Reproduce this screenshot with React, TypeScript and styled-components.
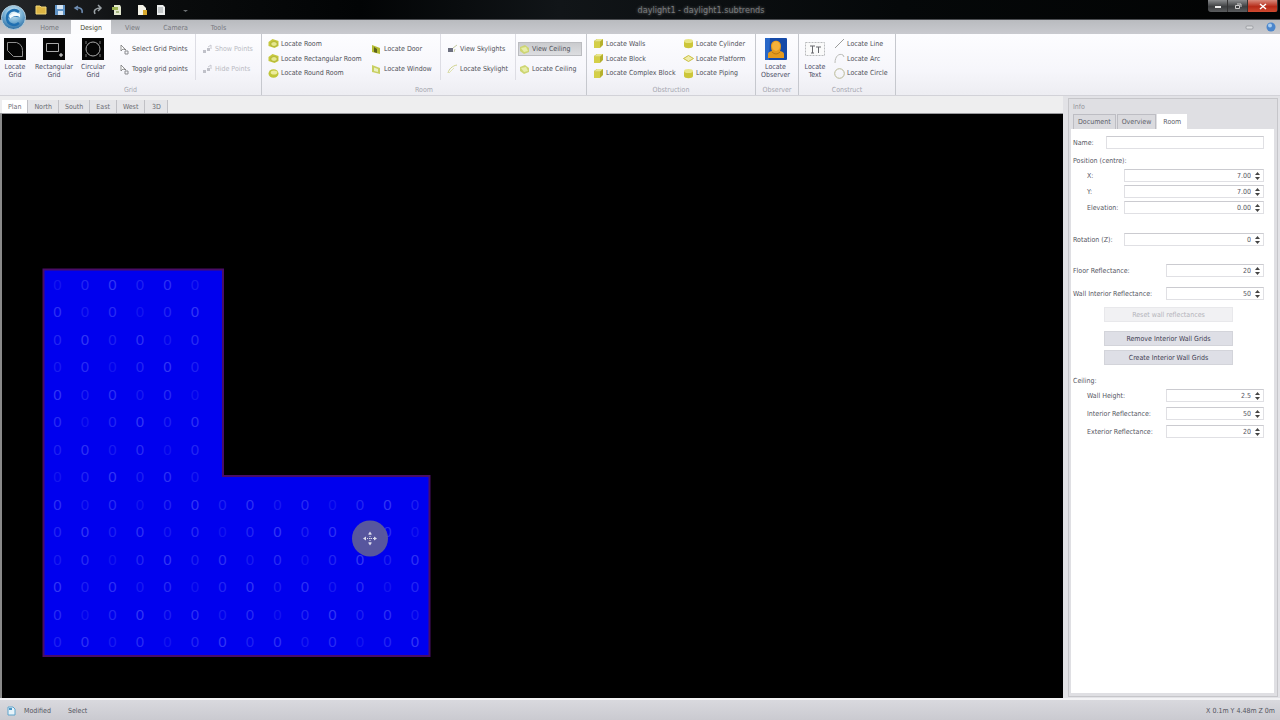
import React from 'react';
import styled, { createGlobalStyle } from 'styled-components';

const Global = createGlobalStyle`
  * { box-sizing: border-box; }
  body { margin: 0; background: #d3d3da; }
  body, button, input {
    font-family: "DejaVu Sans Condensed", "DejaVu Sans", "Liberation Sans", sans-serif;
    font-size: 7px;
    line-height: 8px;
    color: #55565f;
  }
  button { margin: 0; padding: 0; border: 0; background: none; white-space: nowrap; }
  svg { display: block; flex: none; }
`;

const Window = styled.div`
  display: flex;
  flex-direction: column;
  min-height: 100vh;
`;

/* Title bar */
const TitleBar = styled.header`
  position: relative;
  display: flex;
  justify-content: space-between;
  height: 20px;
  padding-left: 34px;
  border-bottom: 1px solid #4a4c50;
  background: linear-gradient(90deg, #25272a 0, #0a0c0d 160px, #020405 360px, #111518 560px, #050809 900px, #020303 100%);
`;
const QuickAccess = styled.nav`
  display: flex;
  align-items: center;
  gap: 5px;
`;
const QuickButton = styled.button<{ $spaced?: boolean }>`
  display: grid;
  place-items: center;
  width: 14px;
  height: 18px;
  margin-left: ${(p) => (p.$spaced ? 6 : 0)}px;
`;
const Title = styled.h1`
  position: absolute;
  left: 0;
  right: 0;
  top: 5px;
  margin: 0 0 0 122px;
  text-align: center;
  font-weight: 400;
  font-size: 9px;
  line-height: 10px;
  color: #77797c;
  text-shadow: 0 0 3px #777;
`;
const WindowButtons = styled.div`
  position: relative;
  display: flex;
  height: 12px;
  margin-right: 2px;
  border-radius: 0 0 3px 3px;
  overflow: hidden;
`;
const WindowButton = styled.button<{ $close?: boolean }>`
  display: grid;
  place-items: center;
  width: ${(p) => (p.$close ? 30 : 20)}px;
  border-right: 1px solid #333;
  background: ${(p) => (p.$close ? 'linear-gradient(#d88a7c, #b62a18 55%, #cf4a30)' : 'linear-gradient(#8a8c8e, #3c3e40 55%, #5b5d5f)')};
`;
const Orb = styled.button`
  position: absolute;
  left: 1px;
  top: 5px;
  width: 25px;
  height: 25px;
  z-index: 2;
`;

/* Ribbon */
const TabStrip = styled.nav`
  display: flex;
  align-items: stretch;
  height: 14px;
  padding-left: 28px;
  background: linear-gradient(#b9bbbf, #c9cacf);
`;
const RibbonTab = styled.button<{ $active?: boolean }>`
  min-width: ${(p) => (p.$active ? 40 : 43)}px;
  padding: 1px 8px 0;
  color: ${(p) => (p.$active ? '#4b4d35' : '#77787e')};
  background: ${(p) => (p.$active ? '#fcfcfe' : 'none')};
`;
const StripTools = styled.div`
  display: flex;
  align-items: center;
  gap: 12px;
  margin-left: auto;
  padding-right: 4px;
`;
const Ribbon = styled.section`
  display: flex;
  height: 62px;
  background: linear-gradient(#fdfdff, #f6f6fb 60%, #ededf2);
  border-bottom: 1px solid #d2d2d8;
`;
const Group = styled.div<{ $width: number }>`
  display: flex;
  flex-direction: column;
  flex: none;
  width: ${(p) => p.$width}px;
  border-right: 1px solid #c6c8ce;
`;
const GroupBody = styled.div`
  display: flex;
  height: 50px;
  padding: 0 2px;
`;
const GroupName = styled.div`
  margin-top: 2px;
  text-align: center;
  color: #a6a7b0;
`;
const LargeButton = styled.button<{ $width?: number }>`
  display: flex;
  flex-direction: column;
  align-items: center;
  flex: none;
  width: ${(p) => p.$width ?? 38}px;
  padding-top: 4px;
  gap: 3px;
  white-space: normal;
  color: #4c4d66;
`;
const Column = styled.div<{ $width: number; $divided?: boolean; $tight?: boolean; $inset?: number }>`
  display: flex;
  flex-direction: column;
  flex: none;
  gap: ${(p) => (p.$tight ? 1 : 6)}px;
  width: ${(p) => p.$width}px;
  height: 46px;
  padding: ${(p) => (p.$tight ? 3 : 8)}px 2px 0 ${(p) => p.$inset ?? 2}px;
  border-right: ${(p) => (p.$divided ? '1px solid #dddde4' : '0')};
`;
const Command = styled.button<{ $pressed?: boolean }>`
  display: flex;
  align-items: center;
  gap: 2px;
  height: 14px;
  padding-left: 1px;
  text-align: left;
  color: #4f5058;
  background: ${(p) => (p.$pressed ? 'linear-gradient(#c9cacd, #dedfe2)' : 'none')};
  box-shadow: ${(p) => (p.$pressed ? 'inset 0 0 0 1px #bbbcc0' : 'none')};
  &:disabled { color: #b9bac2; }
`;

/* Workspace */
const Workspace = styled.main`
  display: flex;
  flex: 1;
  background: #e2e2e6;
`;
const ViewArea = styled.section`
  display: flex;
  flex-direction: column;
  flex: 1;
  min-width: 0;
  background: #eeeeef;
`;
const ViewTabs = styled.nav`
  display: flex;
  height: 18px;
  padding: 4px 0 0 2px;
  border-bottom: 1px solid #9a9a9e;
`;
const ViewTab = styled.button<{ $active?: boolean }>`
  min-width: 23px;
  padding: 0 6px;
  border-right: 1px solid #c0c0c5;
  color: #6c6d74;
  background: ${(p) => (p.$active ? '#fff' : '#e5e5e8')};
`;
const Canvas = styled.div`
  flex: 1;
  min-height: 580px;
  overflow: hidden;
  border-left: 2px solid #8a8a8a;
  background: #000;
`;
const SidePanel = styled.aside`
  display: flex;
  flex-direction: column;
  flex: none;
  width: 210px;
  margin: 2px 2px 1px 5px;
  padding: 4px 3px 3px 2px;
  border: 1px solid #c6c6ca;
  background: #dfdfe3;
`;
const PanelTitle = styled.h2`
  margin: 0 0 2px 2px;
  font-size: 7px;
  line-height: 9px;
  font-weight: 400;
  color: #94959c;
`;
const PanelTabs = styled.nav`
  display: flex;
  gap: 1px;
  height: 15px;
  padding-left: 2px;
`;
const PanelTab = styled.button<{ $active?: boolean }>`
  padding: 0 4px;
  min-width: 30px;
  border: 1px solid ${(p) => (p.$active ? '#fff' : '#bdbdc3')};
  border-bottom: 0;
  color: #5c5d68;
  background: ${(p) => (p.$active ? '#fff' : '#dadade')};
`;
const Form = styled.form`
  flex: 1;
  padding: 7px 10px 6px 2px;
  background: #fff;
`;
const Row = styled.div<{ $gap?: number; $indent?: boolean }>`
  display: flex;
  align-items: center;
  justify-content: space-between;
  height: 13px;
  margin-top: ${(p) => p.$gap ?? 0}px;
  padding-left: ${(p) => (p.$indent ? 14 : 0)}px;
  white-space: nowrap;
`;
const Heading = styled.h3<{ $gap?: number }>`
  margin: ${(p) => p.$gap ?? 8}px 0 4px;
  font-size: 7px;
  line-height: 8px;
  font-weight: 400;
`;
const Field = styled.div<{ $width: number }>`
  display: flex;
  align-items: center;
  flex: none;
  width: ${(p) => p.$width}px;
  height: 13px;
  border: 1px solid #e0e0e4;
  border-top-color: #cbcbd0;
  background: #fff;
`;
const Entry = styled.input`
  flex: 1;
  min-width: 0;
  height: 11px;
  padding: 0 1px 0 4px;
  border: 0;
  outline: 0;
  background: none;
  text-align: right;
`;
const Spinner = styled.div`
  display: flex;
  flex-direction: column;
  width: 11px;
`;
const Step = styled.button`
  display: grid;
  place-items: center;
  height: 5px;
`;
const PanelButton = styled.button<{ $gap: number }>`
  display: block;
  width: 129px;
  height: 15px;
  margin: ${(p) => p.$gap}px auto 0 31px;
  border: 1px solid #d3d4da;
  background: #dedfe6;
  color: #3f4052;
  &:disabled { color: #b4b4ba; background: #f1f1f3; border-color: #e8e8eb; }
`;

const StatusBar = styled.footer`
  display: flex;
  align-items: center;
  gap: 17px;
  height: 22px;
  padding: 2px 5px 0 7px;
  border-top: 2px solid #f3f3f5;
  background: linear-gradient(#d9d9de, #cacad0);
  color: #54555e;
`;
const StatusItem = styled.span`
  display: flex;
  align-items: center;
  gap: 8px;
`;
const Coordinates = styled.output`
  margin-left: auto;
`;

/* Icons */
const GridIcon = ({ shape }: { shape: 'poly' | 'rect' | 'circle' }) => (
  <svg width="22" height="22" viewBox="0 0 22 22" fill="none" stroke="#aaa">
    <rect width="22" height="22" fill="#050505" stroke="none" />
    {shape === 'poly' && <path d="M3.500 4.500h9q6 2 6 8v6h-9l-6-6z" stroke="#8e8e8e" />}
    {shape === 'rect' && <><path d="M3.500 5.500h12v8h-12z" /><path d="M18 15v4m-2-2h4" stroke="#eee" /></>}
    {shape === 'circle' && <><circle cx="11" cy="11" r="7" /><path d="M4 3v3M18 3v3M4 16v3M18 16v3" stroke="#777" /></>}
  </svg>
);
const ObserverIcon = () => (
  <svg width="22" height="22" viewBox="0 0 22 22">
    <rect width="22" height="22" rx="1" fill="#154aa8" />
    <path d="M0 0h5l-1 22H0z" fill="#2867c8" />
    <path d="M3 20v-4q0-2 4-3-1-2-1-5c0-7 10-7 10 0q0 3-1 5 4 1 4 3v4z" fill="#e59a1c" />
    <path d="M7 8c0-6 8-6 8 0q0 4-4 5-4-1-4-5z" fill="#f3b13a" />
    <path d="M7 14q4 4 8 0" fill="none" stroke="#b87812" />
  </svg>
);
const TextIcon = () => (
  <svg width="22" height="22" viewBox="0 0 22 22" fill="none">
    <rect x="1.500" y="4.500" width="19" height="13" fill="#fafafa" stroke="#b9babd" strokeDasharray="2 1" />
    <path d="M6 8h5M8.500 8v7M7 15h3M12 9h5M14.500 9v6" stroke="#66676c" />
  </svg>
);

type IconKind = 'room' | 'round' | 'door' | 'window' | 'skyview' | 'skylight' | 'ceiling' | 'block' | 'cylinder' | 'platform' | 'select' | 'points' | 'line' | 'arc' | 'circle';

const SmallIcon = ({ kind }: { kind: IconKind }) => (
  <svg width="11" height="11" viewBox="0 0 11 11" fill="none">
    {kind === 'room' && <><path d="M.500 4l4-3 6 2v5l-4 2-6-2z" fill="#c6c83e" /><path d="M3 4.500l3-1 3 1v3l-3 1-3-1z" fill="#e6e88e" stroke="#a5a92a" strokeWidth=".7" /></>}
    {kind === 'round' && <><ellipse cx="5.500" cy="5.500" rx="5" ry="4.300" fill="#c0c638" /><ellipse cx="6" cy="4.500" rx="3.300" ry="2" fill="#ecec9c" /></>}
    {kind === 'door' && <><path d="M1 1l8 3v6L1 8z" fill="#b5bc34" /><path d="M3 3l3 2v4L3 8z" fill="#5b611c" /></>}
    {kind === 'window' && <><path d="M1 1l8 3v6L1 8z" fill="#c8cf62" /><path d="M3 3.500l4 1.500v3L3 7z" fill="#eaf0c0" /></>}
    {kind === 'skyview' && <><path d="M1 4h5v4H1z" fill="#6d7080" /><path d="M6 4l4-3M7 8l1-3" stroke="#c5caa0" /></>}
    {kind === 'skylight' && <><path d="M1 9c1-4 4-7 9-8" stroke="#cfd38c" /><path d="M2 9l5-5" stroke="#e0e3b0" /></>}
    {kind === 'ceiling' && <><path d="M1 3l5-2 4 3v4L5 10 1 7z" fill="#cdd573" /><path d="M2 4l5-1 2 4-4 1z" fill="#e7edaa" /></>}
    {kind === 'block' && <><path d="M1 3l3-2h6v6L7 10H1z" fill="#b5b02c" /><path d="M1 3.500h6V10H1z" fill="#d4cf48" /><path d="M1 3.500L4 1h6L7 3.500z" fill="#e8e68c" /></>}
    {kind === 'cylinder' && <><path d="M1 3v5c0 3 9 3 9 0V3z" fill="#ccc63a" /><ellipse cx="5.500" cy="3" rx="4.500" ry="2" fill="#e8e583" /></>}
    {kind === 'platform' && <path d="M.500 5.500l5-3 5 3-5 3z" fill="#f0ecaa" stroke="#c8be3e" />}
    {kind === 'select' && <><path d="M2 1v6l2-2 3 1z" fill="#fff" stroke="#777" strokeWidth=".8" /><path d="M6 7h3v3H6z" stroke="#8b8c90" /></>}
    {kind === 'points' && <><path d="M1 6h3v3H1zM5 4h3v3H5z" fill="#c0c1c9" /><path d="M6 3l3-2v4" stroke="#c7c8d0" /></>}
    {kind === 'line' && <path d="M1 10L10 1" stroke="#9b9c9a" />}
    {kind === 'arc' && <path d="M1 10C1 3 5 0 9 2l1 2" stroke="#bbbcb8" />}
    {kind === 'circle' && <circle cx="5.500" cy="5.500" r="4.800" stroke="#b7b794" />}
  </svg>
);

const quickIcons = [
  { name: 'Open', art: <path d="M1 2h4l1 1h5v7H1z" fill="#dcb544" stroke="#f1d77a" /> },
  { name: 'Save', art: <><path d="M1 1h10v10H1z" fill="#5f93c6" /><path d="M3 1h6v4H3zM4 7h5v4H4z" fill="#d5e5f4" /></> },
  { name: 'Undo', art: <path d="M9 9c1-4-2-6-6-5M5 2L2 4l3 2" fill="none" stroke="#6f8eb4" strokeWidth="1.500" /> },
  { name: 'Redo', art: <path d="M3 10C1 6 4 4 9 4M6 1l3 3-3 3" fill="none" stroke="#9ba2a6" strokeWidth="1.500" /> },
  { name: 'Import', art: <><path d="M3 1h6l1 2v8H3z" fill="#e3e8cf" /><path d="M1 3h6v3H1z" fill="#9db352" /><path d="M5 8h3" stroke="#668030" /></> },
  { name: 'New from file', spaced: true, art: <><path d="M2 1h5l3 3v7H2z" fill="#f4f3e8" /><path d="M7 6h4v5H7z" fill="#d8a82d" /></> },
  { name: 'Report', art: <><path d="M2 1h6l2 2v8H2z" fill="#eceeee" /><path d="M3 4h5M3 6h5M3 8h5" stroke="#9aa1a3" /></> },
];

const Cmd = ({ icon, children, pressed, disabled }: { icon: IconKind; children: React.ReactNode; pressed?: boolean; disabled?: boolean }) => (
  <Command type="button" $pressed={pressed} aria-pressed={pressed} disabled={disabled}>
    <SmallIcon kind={icon} />
    {children}
  </Command>
);

const NumberRow = ({ id, label, value, wide, indent, gap }: { id: string; label: string; value: string; wide?: boolean; indent?: boolean; gap?: number }) => (
  <Row $gap={gap} $indent={indent}>
    <label htmlFor={id}>{label}</label>
    <Field $width={wide ? 140 : 98}>
      <Entry id={id} defaultValue={value} inputMode="decimal" />
      <Spinner>
        <Step type="button" aria-label={`Increase ${label}`}><svg width="5" height="3"><path d="M0 3l2.500-3L5 3z" fill="#444" /></svg></Step>
        <Step type="button" aria-label={`Decrease ${label}`}><svg width="5" height="3"><path d="M0 0l2.500 3L5 0z" fill="#444" /></svg></Step>
      </Spinner>
    </Field>
  </Row>
);

const PITCH = 27.5;
const gridPoints = Array.from({ length: 14 }, (_, row) =>
  Array.from({ length: row < 8 ? 6 : 14 }, (_, col) => ({
    x: 55.5 + col * PITCH,
    y: 175.5 + row * PITCH,
    opacity: 0.16 + ((row * 5 + col * 3) % 7) * 0.04,
  })),
).flat();

const Plan = () => (
  <svg width="440" height="560" viewBox="0 0 440 560" role="img" aria-label="Room plan">
    <path d="M41.500 155.500h179.500v206.500h206.500v180H41.500z" fill="#0000ee" stroke="#4a0c66" strokeWidth="2" />
    <g fontFamily="Liberation Sans Narrow, Liberation Sans, sans-serif" fontSize="15" fill="#7c86ff" textAnchor="middle">
      {gridPoints.map((p) => (
        <text key={`${p.x}-${p.y}`} x={p.x} y={p.y} opacity={p.opacity}>0</text>
      ))}
    </g>
    <circle cx="368" cy="424.500" r="18" fill="#5e5c98" fillOpacity=".93" />
    <g stroke="#dcdcec" fill="#dcdcec">
      <path d="M363 424.500h10M368 420v9" strokeDasharray="1 1" />
      <path d="M361 424.500l3-2v4zM375 424.500l-3-2v4zM368 417.500l-2 3h4zM368 431.500l-2-3h4z" stroke="none" />
    </g>
  </svg>
);

export default function App() {
  return (
    <Window>
      <Global />
      <TitleBar>
        <QuickAccess aria-label="Quick access">
          {quickIcons.map((q) => (
            <QuickButton key={q.name} type="button" aria-label={q.name} $spaced={q.spaced}>
              <svg width="12" height="12" viewBox="0 0 12 12">{q.art}</svg>
            </QuickButton>
          ))}
          <QuickButton type="button" aria-label="Customize" $spaced>
            <svg width="12" height="12" viewBox="0 0 12 12"><path d="M3 6h5L5.500 8z" fill="#6b6f72" /></svg>
          </QuickButton>
        </QuickAccess>
        <Title>daylight1 - daylight1.subtrends</Title>
        <WindowButtons>
          <WindowButton type="button" aria-label="Minimize"><svg width="8" height="6"><path d="M1 3h6v2H1z" fill="#eee" /></svg></WindowButton>
          <WindowButton type="button" aria-label="Restore"><svg width="8" height="7"><path d="M1.500 2.500h4v3h-4zM3 1h4v3" fill="none" stroke="#ccc" /></svg></WindowButton>
          <WindowButton type="button" aria-label="Close" $close><svg width="8" height="7"><path d="M1 1l6 5M7 1L1 6" stroke="#fff" strokeWidth="1.500" /></svg></WindowButton>
        </WindowButtons>
        <Orb type="button" aria-label="Application menu">
          <svg width="25" height="25" viewBox="0 0 25 25">
            <defs>
              <radialGradient id="orb" cx=".5" cy=".3" r=".7">
                <stop offset="0" stopColor="#e8f4fa" />
                <stop offset=".5" stopColor="#7fb6d8" />
                <stop offset="1" stopColor="#2b6da4" />
              </radialGradient>
            </defs>
            <circle cx="12.500" cy="12.500" r="12" fill="url(#orb)" stroke="#b6cddb" />
            <path d="M18 7c-5-4-12-1-12 6 0 6 7 9 12 5M8 13c3-3 6-3 10-2" fill="none" stroke="#1f70b2" strokeWidth="2.500" />
            <path d="M8 11c3-3 7-4 11-2v3c-4-2-7-1-10 2z" fill="#f4fbff" />
          </svg>
        </Orb>
      </TitleBar>

      <TabStrip aria-label="Ribbon tabs">
        <RibbonTab type="button">Home</RibbonTab>
        <RibbonTab type="button" $active>Design</RibbonTab>
        <RibbonTab type="button">View</RibbonTab>
        <RibbonTab type="button">Camera</RibbonTab>
        <RibbonTab type="button">Tools</RibbonTab>
        <StripTools>
          <button type="button" aria-label="Minimize ribbon"><svg width="9" height="8"><rect x="1" y="3" width="7" height="3" rx="1" fill="#dcdde0" stroke="#8d8f94" strokeWidth=".7" /></svg></button>
          <button type="button" aria-label="Help"><svg width="10" height="10"><circle cx="5" cy="5" r="4.500" fill="#4b86cc" /><circle cx="4" cy="3.500" r="2" fill="#a9cdf0" /></svg></button>
        </StripTools>
      </TabStrip>

      <Ribbon>
        <Group $width={262}>
          <GroupBody>
            <LargeButton $width={26}><GridIcon shape="poly" />Locate<br />Grid</LargeButton>
            <LargeButton $width={52}><GridIcon shape="rect" />Rectangular Grid</LargeButton>
            <LargeButton $width={26}><GridIcon shape="circle" />Circular Grid</LargeButton>
            <Column $width={90} $divided $inset={12}>
              <Cmd icon="select">Select Grid Points</Cmd>
              <Cmd icon="select">Toggle grid points</Cmd>
            </Column>
            <Column $width={62} $inset={5}>
              <Cmd icon="points" disabled>Show Points</Cmd>
              <Cmd icon="points" disabled>Hide Points</Cmd>
            </Column>
          </GroupBody>
          <GroupName>Grid</GroupName>
        </Group>
        <Group $width={325}>
          <GroupBody>
            <Column $width={102} $tight $inset={3}>
              <Cmd icon="room">Locate Room</Cmd>
              <Cmd icon="room">Locate Rectangular Room</Cmd>
              <Cmd icon="round">Locate Round Room</Cmd>
            </Column>
            <Column $width={75} $divided $inset={4}>
              <Cmd icon="door">Locate Door</Cmd>
              <Cmd icon="window">Locate Window</Cmd>
            </Column>
            <Column $width={75} $divided $inset={5}>
              <Cmd icon="skyview">View Skylights</Cmd>
              <Cmd icon="skylight">Locate Skylight</Cmd>
            </Column>
            <Column $width={68}>
              <Cmd icon="ceiling" pressed>View Ceiling</Cmd>
              <Cmd icon="ceiling">Locate Ceiling</Cmd>
            </Column>
          </GroupBody>
          <GroupName>Room</GroupName>
        </Group>
        <Group $width={169}>
          <GroupBody>
            <Column $width={90} $tight $inset={3}>
              <Cmd icon="block">Locate Walls</Cmd>
              <Cmd icon="block">Locate Block</Cmd>
              <Cmd icon="block">Locate Complex Block</Cmd>
            </Column>
            <Column $width={72} $tight $inset={3}>
              <Cmd icon="cylinder">Locate Cylinder</Cmd>
              <Cmd icon="platform">Locate Platform</Cmd>
              <Cmd icon="cylinder">Locate Piping</Cmd>
            </Column>
          </GroupBody>
          <GroupName>Obstruction</GroupName>
        </Group>
        <Group $width={43}>
          <GroupBody>
            <LargeButton $width={35}><ObserverIcon />Locate Observer</LargeButton>
          </GroupBody>
          <GroupName>Observer</GroupName>
        </Group>
        <Group $width={97}>
          <GroupBody>
            <LargeButton $width={28}><TextIcon />Locate<br />Text</LargeButton>
            <Column $width={62} $tight $inset={4}>
              <Cmd icon="line">Locate Line</Cmd>
              <Cmd icon="arc">Locate Arc</Cmd>
              <Cmd icon="circle">Locate Circle</Cmd>
            </Column>
          </GroupBody>
          <GroupName>Construct</GroupName>
        </Group>
      </Ribbon>

      <Workspace>
        <ViewArea>
          <ViewTabs aria-label="Views">
            {['Plan', 'North', 'South', 'East', 'West', '3D'].map((name) => (
              <ViewTab key={name} type="button" $active={name === 'Plan'}>{name}</ViewTab>
            ))}
          </ViewTabs>
          <Canvas><Plan /></Canvas>
        </ViewArea>
        <SidePanel>
          <PanelTitle>Info</PanelTitle>
          <PanelTabs aria-label="Info tabs">
            <PanelTab type="button">Document</PanelTab>
            <PanelTab type="button">Overview</PanelTab>
            <PanelTab type="button" $active>Room</PanelTab>
          </PanelTabs>
          <Form>
            <Row>
              <label htmlFor="name">Name:</label>
              <Field $width={158}><Entry id="name" /></Field>
            </Row>
            <Heading>Position (centre):</Heading>
            <NumberRow id="x" label="X:" value="7.00" wide indent />
            <NumberRow id="y" label="Y:" value="7.00" wide indent gap={3} />
            <NumberRow id="elevation" label="Elevation:" value="0.00" wide indent gap={3} />
            <NumberRow id="rotation" label="Rotation (Z):" value="0" wide gap={19} />
            <NumberRow id="floor" label="Floor Reflectance:" value="20" gap={18} />
            <NumberRow id="wall" label="Wall Interior Reflectance:" value="50" gap={10} />
            <PanelButton type="button" $gap={7} disabled>Reset wall reflectances</PanelButton>
            <PanelButton type="button" $gap={9}>Remove Interior Wall Grids</PanelButton>
            <PanelButton type="button" $gap={4}>Create Interior Wall Grids</PanelButton>
            <Heading $gap={12}>Ceiling:</Heading>
            <NumberRow id="height" label="Wall Height:" value="2.5" indent />
            <NumberRow id="interior" label="Interior Reflectance:" value="50" indent gap={5} />
            <NumberRow id="exterior" label="Exterior Reflectance:" value="20" indent gap={5} />
          </Form>
        </SidePanel>
      </Workspace>

      <StatusBar>
        <StatusItem>
          <svg width="9" height="10" viewBox="0 0 9 10"><path d="M1 1h5l2 2v6H1z" fill="#e6f3fa" stroke="#5fa4cc" /><path d="M2 2h3v2H2z" fill="#4b97c6" /></svg>
          Modified
        </StatusItem>
        <StatusItem>Select</StatusItem>
        <Coordinates>X 0.1m Y 4.48m Z 0m</Coordinates>
      </StatusBar>
    </Window>
  );
}
